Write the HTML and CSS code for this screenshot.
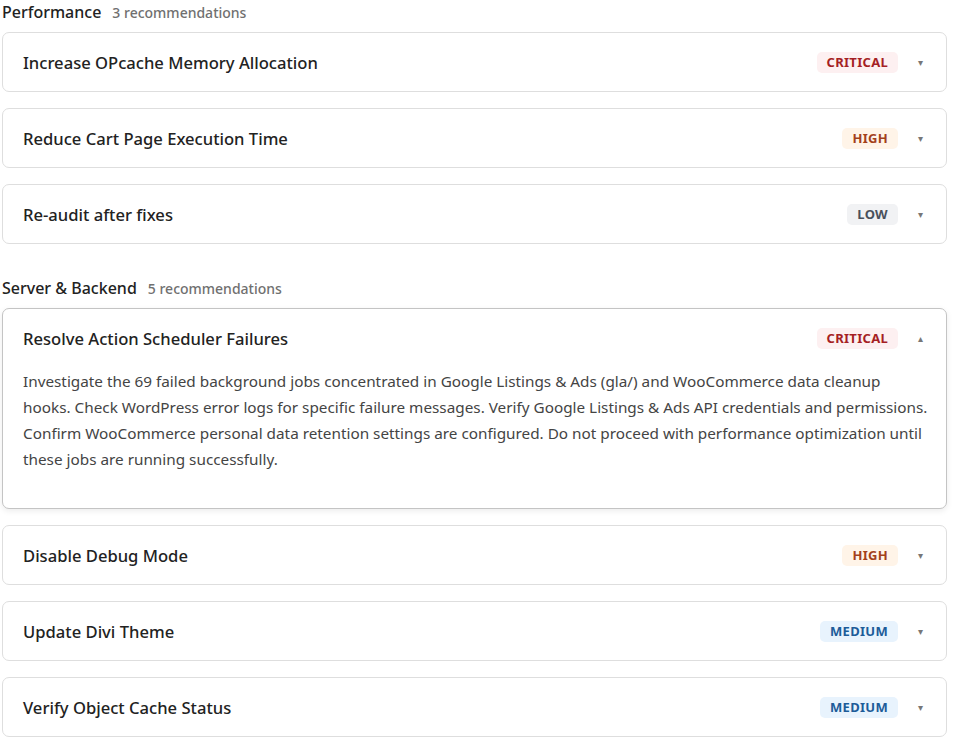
FILE: index.html
```html
<!DOCTYPE html>
<html lang="en">
<head>
<meta charset="utf-8">
<link rel="stylesheet" href="styles.css">
</head>
<body>
<div class="page">
  <section class="group">
    <h2 class="group-head"><span class="group-title">Performance</span><span class="group-count">3 recommendations</span></h2>
    <div class="cards">
      <div class="card">
        <div class="card-head"><span class="card-title">Increase OPcache Memory Allocation</span><span class="badge critical">CRITICAL</span><span class="chev">▾</span></div>
      </div>
      <div class="card">
        <div class="card-head"><span class="card-title">Reduce Cart Page Execution Time</span><span class="badge high">HIGH</span><span class="chev">▾</span></div>
      </div>
      <div class="card">
        <div class="card-head"><span class="card-title">Re-audit after fixes</span><span class="badge low">LOW</span><span class="chev">▾</span></div>
      </div>
    </div>
  </section>
  <section class="group">
    <h2 class="group-head"><span class="group-title">Server &amp; Backend</span><span class="group-count">5 recommendations</span></h2>
    <div class="cards">
      <div class="card open">
        <div class="card-head"><span class="card-title">Resolve Action Scheduler Failures</span><span class="badge critical">CRITICAL</span><span class="chev">▴</span></div>
        <p class="card-body">Investigate the 69 failed background jobs concentrated in Google Listings &amp; Ads (gla/) and WooCommerce data cleanup hooks. Check WordPress error logs for specific failure messages. Verify Google Listings &amp; Ads API credentials and permissions. Confirm WooCommerce personal data retention settings are configured. Do not proceed with performance optimization until these jobs are running successfully.</p>
      </div>
      <div class="card">
        <div class="card-head"><span class="card-title">Disable Debug Mode</span><span class="badge high">HIGH</span><span class="chev">▾</span></div>
      </div>
      <div class="card">
        <div class="card-head"><span class="card-title">Update Divi Theme</span><span class="badge medium">MEDIUM</span><span class="chev">▾</span></div>
      </div>
      <div class="card">
        <div class="card-head"><span class="card-title">Verify Object Cache Status</span><span class="badge medium">MEDIUM</span><span class="chev">▾</span></div>
      </div>
    </div>
  </section>
</div>
</body>
</html>
```

FILE: styles.css
```css
* { box-sizing: border-box; }
body {
  margin: 0;
  background: #fff;
  font-family: "Noto Sans", "Open Sans", sans-serif;
  color: #222;
}
.page {
  width: 949px;
  padding: 0 2px;
}
.group { margin-bottom: 32px; }
.group-head {
  margin: 0 0 8px;
  height: 24px;
  display: flex;
  align-items: center;
  gap: 11px;
  font-weight: normal;
}
.group-title {
  font-size: 16px;
  font-weight: 500;
  color: #222;
}
.group-count {
  font-size: 14px;
  font-weight: 500;
  color: #707070;
}
.cards {
  display: flex;
  flex-direction: column;
  gap: 16px;
}
.card {
  border: 1px solid #dedede;
  border-radius: 7px;
  background: #fff;
}
.card.open {
  border-color: #c4c4c4;
  box-shadow: 0 2px 6px rgba(0,0,0,0.08);
}
.card-head {
  height: 58px;
  display: flex;
  align-items: center;
  padding: 0 21px 0 20px;
}
.card-title {
  flex: 1;
  font-size: 16.6px;
  font-weight: 500;
  color: #222;
  padding-top: 1px;
}
.badge {
  font-size: 13px;
  font-weight: 700;
  letter-spacing: 0.3px;
  padding: 2px 10px;
  border-radius: 5px;
  line-height: 17px;
}
.badge.critical { background: #fdf0f1; color: #a51f24; }
.badge.high { background: #fff4e8; color: #a3401b; }
.badge.low { background: #f1f2f4; color: #4a515c; }
.badge.medium { background: #e8f3fd; color: #1d5c99; }
.chev {
  width: 10px;
  margin-left: 17px;
  font-size: 10px;
  color: #777;
  text-align: center;
}
.card-body {
  margin: 0;
  padding: 1px 18px 36px 20px;
  font-size: 15.3px;
  line-height: 26px;
  color: #444;
}
```
